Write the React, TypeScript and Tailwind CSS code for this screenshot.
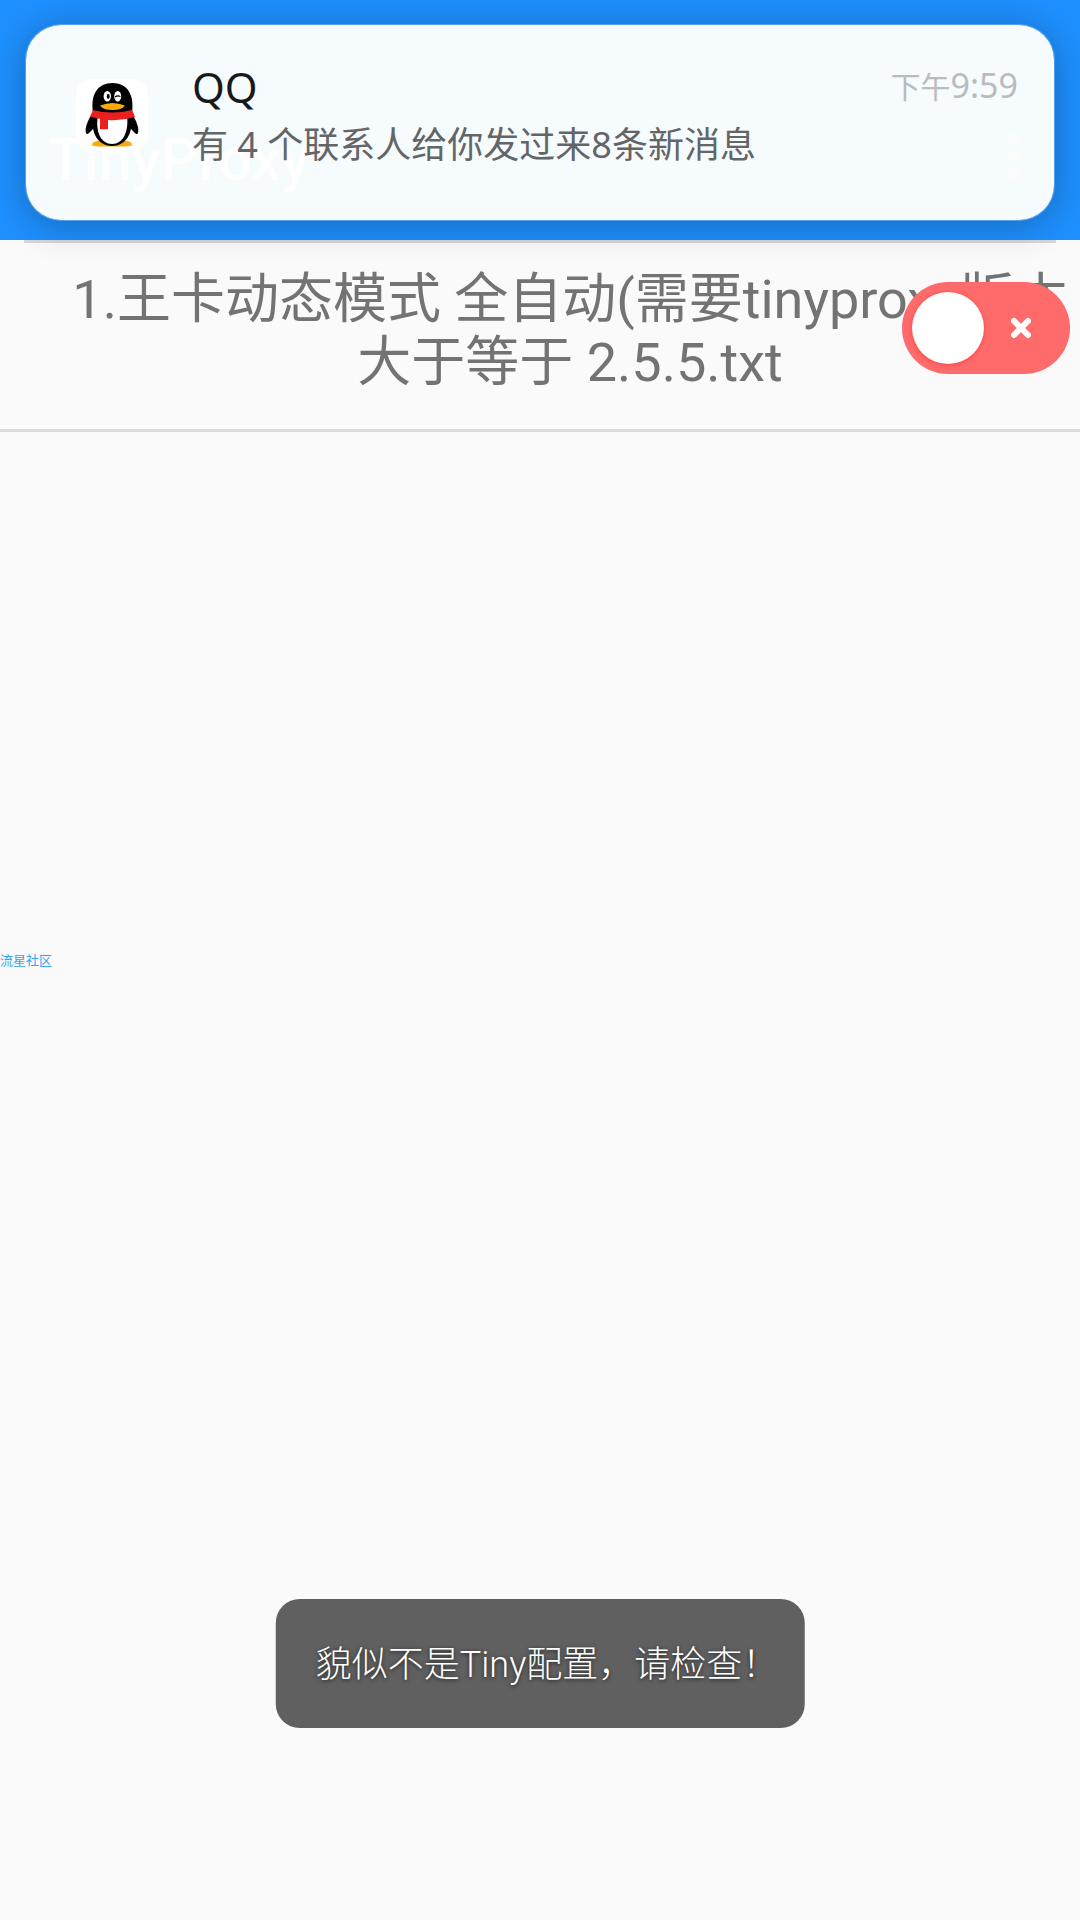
import { useState } from "react";

function Penguin() {
  return (
    <svg viewBox="0 0 72 72" className="size-[72px] shrink-0" role="img" aria-label="QQ">
      <rect width="72" height="72" rx="16" fill="#fff" />
      <path d="M16 66 C16 63 21 61 27 62 H46 C52 61 56 63 56 66 C54 68 42 67.500 36 67.500 C30 67.500 18 68 16 66 Z" fill="#f9ab0b" />
      <path d="M16 35 C12 41 8.500 49 10 54 C11 57 14 53 17 50 L24 50 V35 Z" fill="#000" />
      <path d="M56 35 C60 41 63.500 49 62 54 C61 57 58 53 55 50 L48 50 V35 Z" fill="#000" />
      <path d="M17 36 C14 55 23 67 36 67 C49 67 58 55 55 36 Z" fill="#000" />
      <path d="M22 36 H51 C53 53 47 65 36 65 C25 65 19 53 22 36 Z" fill="#fff" />
      <path d="M17 34 C14 15 22 4 36.500 4 C51 4 58.500 15 56 34 C46 37 28 37 17 34 Z" fill="#000" />
      <ellipse cx="31.300" cy="17.300" rx="3.700" ry="5.300" fill="#fff" />
      <ellipse cx="41.700" cy="17.300" rx="3.500" ry="5.300" fill="#fff" />
      <ellipse cx="32.200" cy="17.500" rx="1.500" ry="2.400" fill="#000" />
      <path d="M39 18 Q41.500 16 44.500 17.500" fill="none" stroke="#000" strokeWidth="1.200" />
      <path d="M24 26.500 Q36.500 21.500 49 26.500 Q46 31 36.500 31 Q27 31 24 26.500 Z" fill="#f9ab0b" />
      <path d="M17 31 Q36 36 56 31 L59 38 Q46 42 32 41 V50 Q28 50.500 24 50 V40 L14 37.500 Z" fill="#ea1f1f" />
    </svg>
  );
}

function NotificationCard() {
  return (
    <section
      aria-label="通知"
      className="absolute inset-x-[25px] top-6 z-20 flex h-[197px] items-start rounded-[36px] border border-[#78abdf]/60 bg-[#fdfefd]/97 bg-clip-padding pr-9 pl-[50px] text-[#636567] shadow-[0_4px_36px_rgba(0,0,0,0.28)]"
    >
      <div className="pt-[54px]">
        <Penguin />
      </div>
      <div className="min-w-0 grow pt-9 pl-11">
        <div className="flex items-start justify-between">
          <h2 className="font-['Noto_Sans','Noto_Sans_CJK_SC',sans-serif] text-[42px] leading-[52px] text-[#17191a]">QQ</h2>
          <time className="flex items-center text-[#b9bbbe]">
            <span className="font-['Noto_Sans_CJK_SC',sans-serif] text-[30px] leading-[48px]">下午</span>
            <span className="font-['Noto_Sans',sans-serif] text-[34px] leading-[48px]">9:59</span>
          </time>
        </div>
        <p className="mt-1 font-['Noto_Sans','Noto_Sans_CJK_SC',sans-serif] text-[36px] leading-[56px] whitespace-nowrap">
          有 4 个联系人给你发过来8条新消息
        </p>
      </div>
    </section>
  );
}

function ProfileRow() {
  const [enabled, setEnabled] = useState(false);
  return (
    <li className="relative border-b-[3px] border-[#dcdcdc]">
      <div className="mx-6 h-[3px] bg-[#d8d8d8]" />
      <div className="pt-[25px] pb-[35px] pl-15">
        <p className="text-center font-['Roboto','Noto_Sans_CJK_SC',sans-serif] text-[54px] leading-[63px] whitespace-nowrap text-[#737373]">
          1.王卡动态模式 全自动(需要tinyproxy版本
          <br />
          大于等于 2.5.5.txt
        </p>
      </div>
      <label className="absolute top-[42px] right-2.5 flex h-[92px] w-42 cursor-pointer items-center rounded-full bg-[#ff6b6b] pl-2.5">
        <input
          type="checkbox"
          role="switch"
          aria-label="启用配置"
          checked={enabled}
          onChange={(event) => setEnabled(event.target.checked)}
          className="size-[72px] cursor-pointer appearance-none rounded-full bg-white shadow-[0_1px_4px_rgba(255,50,50,0.8)] checked:order-2"
        />
        <svg viewBox="0 0 22 22" className="ml-[26px] size-[22px]" aria-hidden="true">
          <path d="M4 4 L18 18 M18 4 L4 18" stroke="#fff" strokeWidth="6" strokeLinecap="round" />
        </svg>
      </label>
    </li>
  );
}

export default function App() {
  return (
    <div className="relative min-h-screen overflow-hidden bg-[#fafafa]">
      <header className="flex h-60 items-end justify-between bg-[#1e90ff] pr-15 pl-12 text-white">
        <h1 className="pb-12 font-['Roboto',sans-serif] text-[59px] leading-[64px] font-medium">TinyProxy</h1>
        <button type="button" aria-label="更多" className="flex w-3 flex-col items-center gap-1.5 pb-15">
          <span className="size-3 rounded-full bg-[#c0b8b0]" />
          <span className="size-3 rounded-full bg-[#c0b8b0]" />
          <span className="size-3 rounded-full bg-[#c0b8b0]" />
        </button>
      </header>
      <NotificationCard />
      <main>
        <ul>
          <ProfileRow />
        </ul>
      </main>
      <div className="absolute top-[950px] left-0 font-['Noto_Sans_CJK_SC',sans-serif] text-[13px] leading-5 text-[#34a3f5]">
        流星社区
      </div>
      <div
        role="status"
        className="absolute bottom-48 left-1/2 -translate-x-1/2 rounded-3xl bg-[#606060] pt-[38px] pr-[26px] pb-[34px] pl-10 font-['Roboto','Noto_Sans_CJK_SC',sans-serif] text-[36px] leading-[57px] font-light whitespace-nowrap text-white [text-shadow:0_1px_4px_rgba(0,0,0,0.7)]"
      >
        貌似不是Tiny配置，请检查！
      </div>
    </div>
  );
}
